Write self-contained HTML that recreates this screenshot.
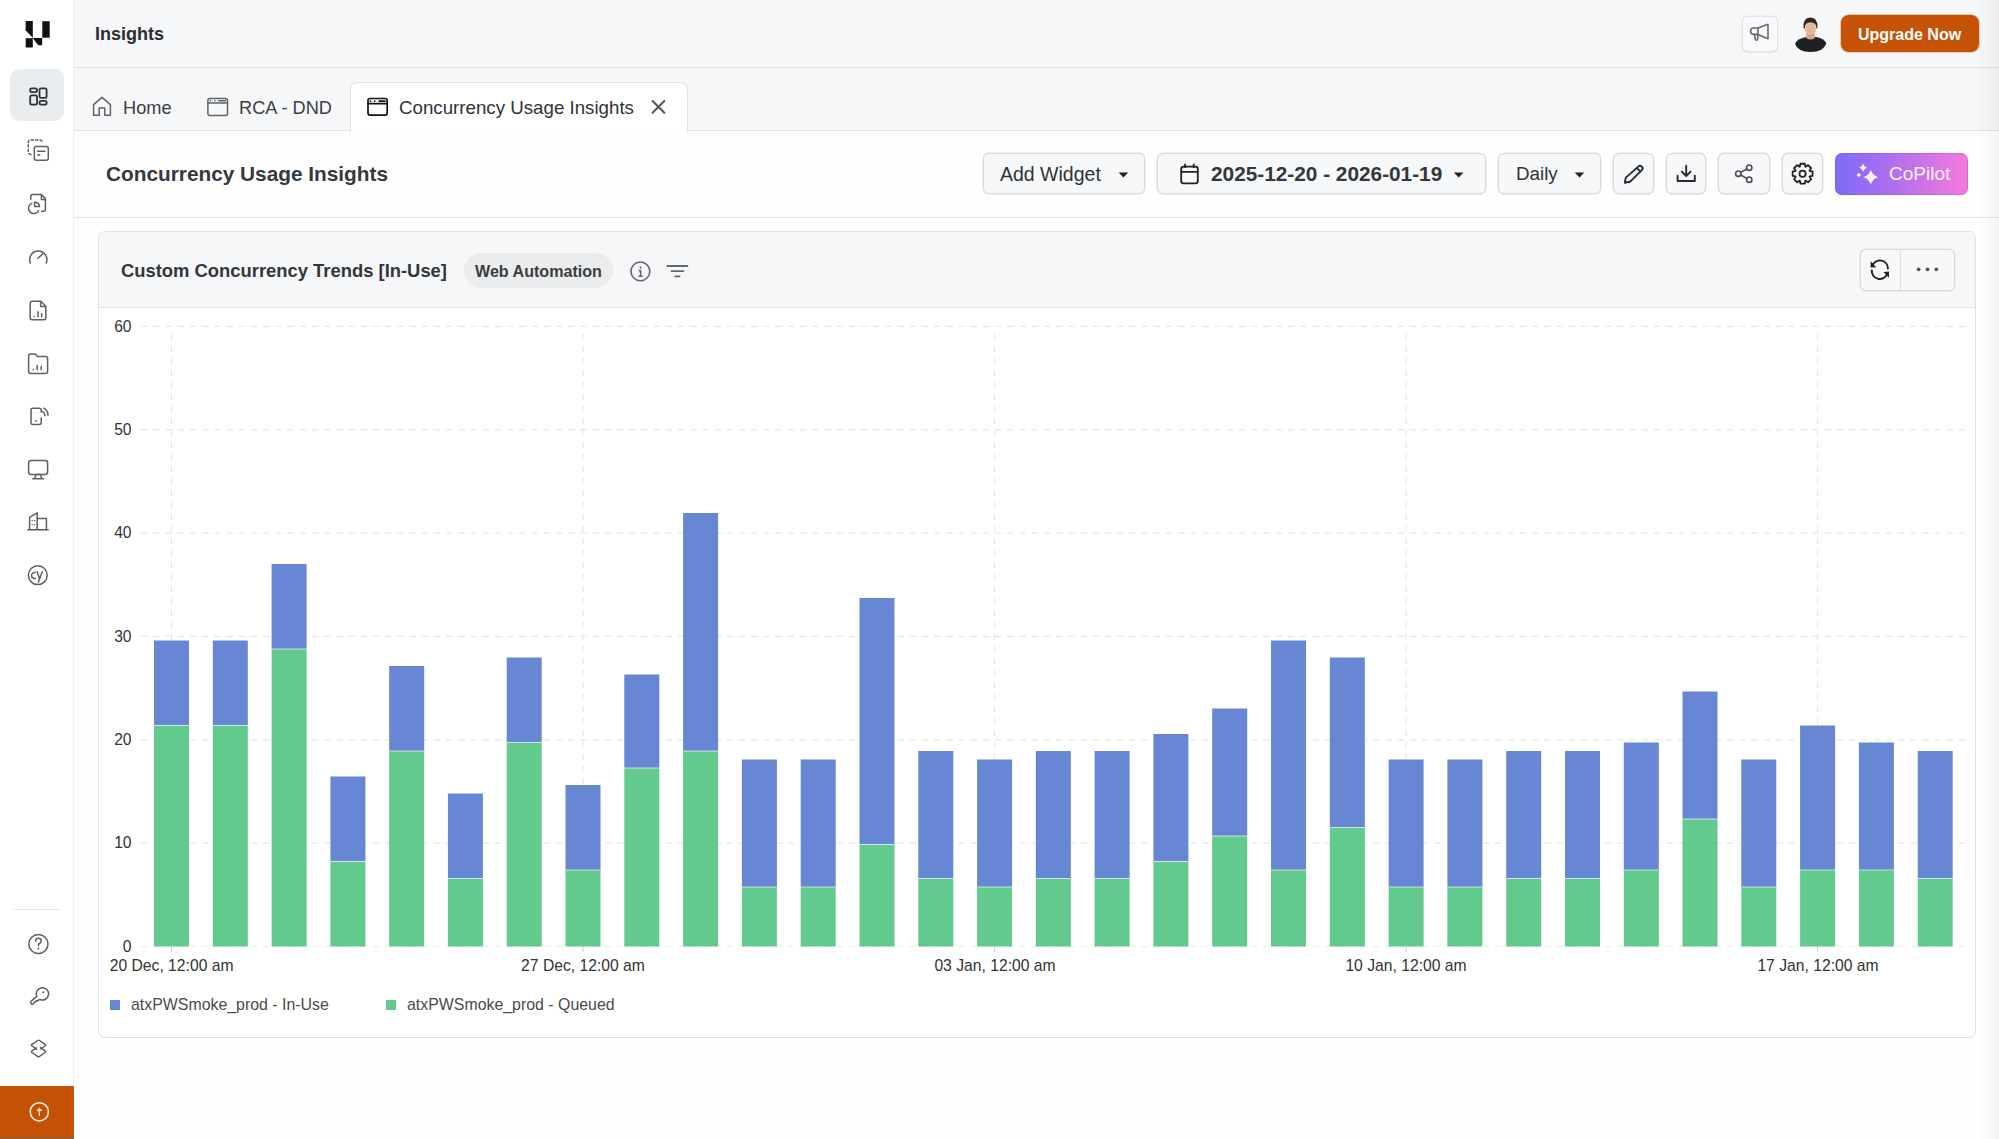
<!DOCTYPE html><html><head><meta charset="utf-8"><style>
*{box-sizing:border-box;margin:0;padding:0}
html,body{width:1999px;height:1139px;overflow:hidden}
body{position:relative;background:#fefefe;font-family:"Liberation Sans",sans-serif;color:#2d3135}
.abs{position:absolute}
.t{position:absolute;white-space:nowrap;line-height:1}
svg{position:absolute;overflow:visible}
.btn{position:absolute;background:#f7f8f9;border:1px solid #d8dadd;border-radius:6px;box-shadow:0 0 0 0.6px #e6e7e9,0 1px 1px rgba(0,0,0,0.05)}
</style></head><body><div class="abs" style="left:74px;top:0;width:1925px;height:68px;background:#f6f7f9;border-bottom:1px solid #dfe0e3;box-shadow:0 1px 0 #eceef0"></div><div class="abs" style="left:74px;top:68px;width:1925px;height:63px;background:#f6f7f9;border-bottom:1px solid #dfe2e5"></div><div class="abs" style="left:74px;top:131px;width:1925px;height:87px;background:#fefefe;border-bottom:1px solid #e2e4e7"></div><div class="t" style="left:95px;top:25px;font-size:18px;font-weight:bold;color:#2a2e33">Insights</div><div class="btn" style="left:1741.5px;top:15.7px;width:36px;height:36px;background:#f8f9fa;border-color:#e3e5e8"></div><svg style="left:1790px;top:12px" width="42" height="44" viewBox="1790 12 42 44">
<path d="M1795 43.8 Q1797.2 38.6 1805.6 37.2 L1815.6 37 Q1824.2 38.2 1826.3 43.2 Q1823.6 52 1810.6 52 Q1797.6 52 1795 43.8Z" fill="#1e2022"/>
<path d="M1806.4 34 H1814.8 V38.2 Q1810.6 40.6 1806.4 38.2Z" fill="#d6a488"/>
<ellipse cx="1810.5" cy="29.2" rx="5.3" ry="8.4" fill="#e4b896"/>
<path d="M1806.6 33.4 Q1810.5 36.4 1814.4 33.4 Q1813.8 36.8 1810.5 37.4 Q1807.2 36.8 1806.6 33.4Z" fill="#d99d8a"/>
<path d="M1803.6 28.4 Q1802.6 17.6 1810.4 17.6 Q1818.2 17.6 1817.4 28.4 L1816.4 28.6 Q1816.4 22.2 1810.4 22.2 Q1804.8 22.2 1804.8 28.6Z" fill="#33241e"/>
</svg><div class="abs" style="left:1841px;top:15px;width:138px;height:37px;background:#c65207;border-radius:8px;box-shadow:0 0 0 1px #f4c6a5"></div><div class="t" style="left:1858px;top:26.8px;font-size:16px;font-weight:bold;color:#fff">Upgrade Now</div><div class="abs" style="left:350px;top:82px;width:338px;height:50px;background:#fff;border:1px solid #e0e2e5;border-bottom:none;border-radius:7px 7px 0 0"></div><div class="t" style="left:123px;top:98.6px;font-size:18.2px;color:#3b4045">Home</div><div class="t" style="left:239px;top:98.6px;font-size:18.2px;color:#3b4045">RCA - DND</div><div class="t" style="left:399px;top:98.6px;font-size:18.72px;color:#2f3337">Concurrency Usage Insights</div><div class="t" style="left:106px;top:164px;font-size:20.8px;font-weight:bold;color:#35393d">Concurrency Usage Insights</div><div class="btn" style="left:983px;top:153px;width:162px;height:41px"></div><div class="t" style="left:1000px;top:165px;font-size:19.5px;color:#2f3337">Add Widget</div><div class="btn" style="left:1157px;top:153px;width:329px;height:41px"></div><div class="t" style="left:1211px;top:163.6px;font-size:20.8px;font-weight:bold;color:#33373b">2025-12-20 - 2026-01-19</div><div class="btn" style="left:1498px;top:153px;width:103px;height:41px"></div><div class="t" style="left:1516px;top:165px;font-size:18.8px;color:#2f3337">Daily</div><div class="btn" style="left:1613px;top:153px;width:41px;height:41px"></div><div class="btn" style="left:1666px;top:153px;width:40px;height:41px"></div><div class="btn" style="left:1718px;top:153px;width:52px;height:41px"></div><div class="btn" style="left:1782px;top:153px;width:41px;height:41px"></div><div class="abs" style="left:1835px;top:153px;width:133px;height:41.5px;border-radius:7px;background:linear-gradient(90deg,#7d6cf6 0%,#b06fee 45%,#f67bdb 100%);box-shadow:inset 0 0 0 1px rgba(90,50,170,0.18)"></div><div class="t" style="left:1889px;top:164.4px;font-size:19px;color:#fff2fc">CoPilot</div><div class="abs" style="left:98px;top:231px;width:1878px;height:807px;background:#fff;border:1px solid #e0e1e3;border-radius:7px;overflow:hidden"><div class="abs" style="left:0;top:0;width:1876px;height:76px;background:#f6f7f9;border-bottom:1px solid #e3e5e8"></div></div><div class="t" style="left:121px;top:262px;font-size:18.4px;font-weight:bold;color:#32363a">Custom Concurrency Trends [In-Use]</div><div class="abs" style="left:464px;top:253px;width:149px;height:35px;border-radius:18px;background:#ebeced"></div><div class="t" style="left:475px;top:263px;font-size:16.1px;font-weight:bold;color:#3a3d41">Web Automation</div><div class="btn" style="left:1860px;top:249px;width:95px;height:42px;background:#f7f8f9"></div><div class="abs" style="left:1900px;top:250px;width:1px;height:40px;background:#dcdfe3"></div><svg style="left:0;top:0" width="1999" height="1139" viewBox="0 0 1999 1139"><line x1="141" y1="326.4" x2="1966" y2="326.4" stroke="#e2e2e2" stroke-width="1" stroke-dasharray="6.5,5.7"/><line x1="141" y1="429.8" x2="1966" y2="429.8" stroke="#e2e2e2" stroke-width="1" stroke-dasharray="6.5,5.7"/><line x1="141" y1="533.1" x2="1966" y2="533.1" stroke="#e2e2e2" stroke-width="1" stroke-dasharray="6.5,5.7"/><line x1="141" y1="636.4" x2="1966" y2="636.4" stroke="#e2e2e2" stroke-width="1" stroke-dasharray="6.5,5.7"/><line x1="141" y1="739.8" x2="1966" y2="739.8" stroke="#e2e2e2" stroke-width="1" stroke-dasharray="6.5,5.7"/><line x1="141" y1="843.1" x2="1966" y2="843.1" stroke="#e2e2e2" stroke-width="1" stroke-dasharray="6.5,5.7"/><line x1="141" y1="946.5" x2="1966" y2="946.5" stroke="#ececec" stroke-width="1" stroke-dasharray="6.5,5.7"/><line x1="171.5" y1="334.0" x2="171.5" y2="946.5" stroke="#e4e4e4" stroke-width="1" stroke-dasharray="6,6"/><line x1="171.5" y1="946.5" x2="171.5" y2="952.2" stroke="#cfcfcf" stroke-width="1"/><line x1="583.0" y1="334.0" x2="583.0" y2="946.5" stroke="#e4e4e4" stroke-width="1" stroke-dasharray="6,6"/><line x1="583.0" y1="946.5" x2="583.0" y2="952.2" stroke="#cfcfcf" stroke-width="1"/><line x1="994.6" y1="334.0" x2="994.6" y2="946.5" stroke="#e4e4e4" stroke-width="1" stroke-dasharray="6,6"/><line x1="994.6" y1="946.5" x2="994.6" y2="952.2" stroke="#cfcfcf" stroke-width="1"/><line x1="1406.1" y1="334.0" x2="1406.1" y2="946.5" stroke="#e4e4e4" stroke-width="1" stroke-dasharray="6,6"/><line x1="1406.1" y1="946.5" x2="1406.1" y2="952.2" stroke="#cfcfcf" stroke-width="1"/><line x1="1817.6" y1="334.0" x2="1817.6" y2="946.5" stroke="#e4e4e4" stroke-width="1" stroke-dasharray="6,6"/><line x1="1817.6" y1="946.5" x2="1817.6" y2="952.2" stroke="#cfcfcf" stroke-width="1"/><rect x="154.0" y="640.5" width="35.0" height="85.0" fill="#6787d5"/><rect x="154.0" y="725.5" width="35.0" height="221.0" fill="#62ca8c"/><line x1="154.0" y1="725.5" x2="189.0" y2="725.5" stroke="#dff0ee" stroke-width="0.8"/><rect x="212.8" y="640.5" width="35.0" height="85.0" fill="#6787d5"/><rect x="212.8" y="725.5" width="35.0" height="221.0" fill="#62ca8c"/><line x1="212.8" y1="725.5" x2="247.8" y2="725.5" stroke="#dff0ee" stroke-width="0.8"/><rect x="271.6" y="564.0" width="35.0" height="85.0" fill="#6787d5"/><rect x="271.6" y="649.0" width="35.0" height="297.5" fill="#62ca8c"/><line x1="271.6" y1="649.0" x2="306.6" y2="649.0" stroke="#dff0ee" stroke-width="0.8"/><rect x="330.4" y="776.5" width="35.0" height="85.0" fill="#6787d5"/><rect x="330.4" y="861.5" width="35.0" height="85.0" fill="#62ca8c"/><line x1="330.4" y1="861.5" x2="365.4" y2="861.5" stroke="#dff0ee" stroke-width="0.8"/><rect x="389.2" y="666.0" width="35.0" height="85.0" fill="#6787d5"/><rect x="389.2" y="751.0" width="35.0" height="195.5" fill="#62ca8c"/><line x1="389.2" y1="751.0" x2="424.2" y2="751.0" stroke="#dff0ee" stroke-width="0.8"/><rect x="447.9" y="793.5" width="35.0" height="85.0" fill="#6787d5"/><rect x="447.9" y="878.5" width="35.0" height="68.0" fill="#62ca8c"/><line x1="447.9" y1="878.5" x2="482.9" y2="878.5" stroke="#dff0ee" stroke-width="0.8"/><rect x="506.7" y="657.5" width="35.0" height="85.0" fill="#6787d5"/><rect x="506.7" y="742.5" width="35.0" height="204.0" fill="#62ca8c"/><line x1="506.7" y1="742.5" x2="541.7" y2="742.5" stroke="#dff0ee" stroke-width="0.8"/><rect x="565.5" y="785.0" width="35.0" height="85.0" fill="#6787d5"/><rect x="565.5" y="870.0" width="35.0" height="76.5" fill="#62ca8c"/><line x1="565.5" y1="870.0" x2="600.5" y2="870.0" stroke="#dff0ee" stroke-width="0.8"/><rect x="624.3" y="674.5" width="35.0" height="93.5" fill="#6787d5"/><rect x="624.3" y="768.0" width="35.0" height="178.5" fill="#62ca8c"/><line x1="624.3" y1="768.0" x2="659.3" y2="768.0" stroke="#dff0ee" stroke-width="0.8"/><rect x="683.1" y="513.0" width="35.0" height="238.0" fill="#6787d5"/><rect x="683.1" y="751.0" width="35.0" height="195.5" fill="#62ca8c"/><line x1="683.1" y1="751.0" x2="718.1" y2="751.0" stroke="#dff0ee" stroke-width="0.8"/><rect x="741.9" y="759.5" width="35.0" height="127.5" fill="#6787d5"/><rect x="741.9" y="887.0" width="35.0" height="59.5" fill="#62ca8c"/><line x1="741.9" y1="887.0" x2="776.9" y2="887.0" stroke="#dff0ee" stroke-width="0.8"/><rect x="800.7" y="759.5" width="35.0" height="127.5" fill="#6787d5"/><rect x="800.7" y="887.0" width="35.0" height="59.5" fill="#62ca8c"/><line x1="800.7" y1="887.0" x2="835.7" y2="887.0" stroke="#dff0ee" stroke-width="0.8"/><rect x="859.5" y="598.0" width="35.0" height="246.5" fill="#6787d5"/><rect x="859.5" y="844.5" width="35.0" height="102.0" fill="#62ca8c"/><line x1="859.5" y1="844.5" x2="894.5" y2="844.5" stroke="#dff0ee" stroke-width="0.8"/><rect x="918.3" y="751.0" width="35.0" height="127.5" fill="#6787d5"/><rect x="918.3" y="878.5" width="35.0" height="68.0" fill="#62ca8c"/><line x1="918.3" y1="878.5" x2="953.3" y2="878.5" stroke="#dff0ee" stroke-width="0.8"/><rect x="977.1" y="759.5" width="35.0" height="127.5" fill="#6787d5"/><rect x="977.1" y="887.0" width="35.0" height="59.5" fill="#62ca8c"/><line x1="977.1" y1="887.0" x2="1012.1" y2="887.0" stroke="#dff0ee" stroke-width="0.8"/><rect x="1035.8" y="751.0" width="35.0" height="127.5" fill="#6787d5"/><rect x="1035.8" y="878.5" width="35.0" height="68.0" fill="#62ca8c"/><line x1="1035.8" y1="878.5" x2="1070.8" y2="878.5" stroke="#dff0ee" stroke-width="0.8"/><rect x="1094.6" y="751.0" width="35.0" height="127.5" fill="#6787d5"/><rect x="1094.6" y="878.5" width="35.0" height="68.0" fill="#62ca8c"/><line x1="1094.6" y1="878.5" x2="1129.6" y2="878.5" stroke="#dff0ee" stroke-width="0.8"/><rect x="1153.4" y="734.0" width="35.0" height="127.5" fill="#6787d5"/><rect x="1153.4" y="861.5" width="35.0" height="85.0" fill="#62ca8c"/><line x1="1153.4" y1="861.5" x2="1188.4" y2="861.5" stroke="#dff0ee" stroke-width="0.8"/><rect x="1212.2" y="708.5" width="35.0" height="127.5" fill="#6787d5"/><rect x="1212.2" y="836.0" width="35.0" height="110.5" fill="#62ca8c"/><line x1="1212.2" y1="836.0" x2="1247.2" y2="836.0" stroke="#dff0ee" stroke-width="0.8"/><rect x="1271.0" y="640.5" width="35.0" height="229.5" fill="#6787d5"/><rect x="1271.0" y="870.0" width="35.0" height="76.5" fill="#62ca8c"/><line x1="1271.0" y1="870.0" x2="1306.0" y2="870.0" stroke="#dff0ee" stroke-width="0.8"/><rect x="1329.8" y="657.5" width="35.0" height="170.0" fill="#6787d5"/><rect x="1329.8" y="827.5" width="35.0" height="119.0" fill="#62ca8c"/><line x1="1329.8" y1="827.5" x2="1364.8" y2="827.5" stroke="#dff0ee" stroke-width="0.8"/><rect x="1388.6" y="759.5" width="35.0" height="127.5" fill="#6787d5"/><rect x="1388.6" y="887.0" width="35.0" height="59.5" fill="#62ca8c"/><line x1="1388.6" y1="887.0" x2="1423.6" y2="887.0" stroke="#dff0ee" stroke-width="0.8"/><rect x="1447.4" y="759.5" width="35.0" height="127.5" fill="#6787d5"/><rect x="1447.4" y="887.0" width="35.0" height="59.5" fill="#62ca8c"/><line x1="1447.4" y1="887.0" x2="1482.4" y2="887.0" stroke="#dff0ee" stroke-width="0.8"/><rect x="1506.2" y="751.0" width="35.0" height="127.5" fill="#6787d5"/><rect x="1506.2" y="878.5" width="35.0" height="68.0" fill="#62ca8c"/><line x1="1506.2" y1="878.5" x2="1541.2" y2="878.5" stroke="#dff0ee" stroke-width="0.8"/><rect x="1565.0" y="751.0" width="35.0" height="127.5" fill="#6787d5"/><rect x="1565.0" y="878.5" width="35.0" height="68.0" fill="#62ca8c"/><line x1="1565.0" y1="878.5" x2="1600.0" y2="878.5" stroke="#dff0ee" stroke-width="0.8"/><rect x="1623.8" y="742.5" width="35.0" height="127.5" fill="#6787d5"/><rect x="1623.8" y="870.0" width="35.0" height="76.5" fill="#62ca8c"/><line x1="1623.8" y1="870.0" x2="1658.8" y2="870.0" stroke="#dff0ee" stroke-width="0.8"/><rect x="1682.5" y="691.5" width="35.0" height="127.5" fill="#6787d5"/><rect x="1682.5" y="819.0" width="35.0" height="127.5" fill="#62ca8c"/><line x1="1682.5" y1="819.0" x2="1717.5" y2="819.0" stroke="#dff0ee" stroke-width="0.8"/><rect x="1741.3" y="759.5" width="35.0" height="127.5" fill="#6787d5"/><rect x="1741.3" y="887.0" width="35.0" height="59.5" fill="#62ca8c"/><line x1="1741.3" y1="887.0" x2="1776.3" y2="887.0" stroke="#dff0ee" stroke-width="0.8"/><rect x="1800.1" y="725.5" width="35.0" height="144.5" fill="#6787d5"/><rect x="1800.1" y="870.0" width="35.0" height="76.5" fill="#62ca8c"/><line x1="1800.1" y1="870.0" x2="1835.1" y2="870.0" stroke="#dff0ee" stroke-width="0.8"/><rect x="1858.9" y="742.5" width="35.0" height="127.5" fill="#6787d5"/><rect x="1858.9" y="870.0" width="35.0" height="76.5" fill="#62ca8c"/><line x1="1858.9" y1="870.0" x2="1893.9" y2="870.0" stroke="#dff0ee" stroke-width="0.8"/><rect x="1917.7" y="751.0" width="35.0" height="127.5" fill="#6787d5"/><rect x="1917.7" y="878.5" width="35.0" height="68.0" fill="#62ca8c"/><line x1="1917.7" y1="878.5" x2="1952.7" y2="878.5" stroke="#dff0ee" stroke-width="0.8"/></svg><div class="t" style="right:1867.5px;top:318.7px;font-size:15.6px;color:#333">60</div><div class="t" style="right:1867.5px;top:422.1px;font-size:15.6px;color:#333">50</div><div class="t" style="right:1867.5px;top:525.4px;font-size:15.6px;color:#333">40</div><div class="t" style="right:1867.5px;top:628.7px;font-size:15.6px;color:#333">30</div><div class="t" style="right:1867.5px;top:732.1px;font-size:15.6px;color:#333">20</div><div class="t" style="right:1867.5px;top:835.4px;font-size:15.6px;color:#333">10</div><div class="t" style="right:1867.5px;top:938.8px;font-size:15.6px;color:#333">0</div><div class="t" style="left:109.6px;top:957.5px;width:124px;text-align:center;font-size:15.7px;color:#333">20 Dec, 12:00 am</div><div class="t" style="left:521.0px;top:957.5px;width:124px;text-align:center;font-size:15.7px;color:#333">27 Dec, 12:00 am</div><div class="t" style="left:933.0px;top:957.5px;width:124px;text-align:center;font-size:15.7px;color:#333">03 Jan, 12:00 am</div><div class="t" style="left:1344.0px;top:957.5px;width:124px;text-align:center;font-size:15.7px;color:#333">10 Jan, 12:00 am</div><div class="t" style="left:1756.0px;top:957.5px;width:124px;text-align:center;font-size:15.7px;color:#333">17 Jan, 12:00 am</div><div class="abs" style="left:110px;top:1000px;width:10px;height:10px;background:#6787d5"></div><div class="t" style="left:131px;top:997px;font-size:15.9px;color:#4a4a4a">atxPWSmoke_prod - In-Use</div><div class="abs" style="left:386px;top:1000px;width:10px;height:10px;background:#62ca8c"></div><div class="t" style="left:407px;top:997px;font-size:15.9px;color:#4a4a4a">atxPWSmoke_prod - Queued</div><div class="abs" style="left:1979px;top:0;width:20px;height:1139px;background:linear-gradient(90deg,rgba(0,0,0,0.005),rgba(0,0,0,0.04))"></div><div class="abs" style="left:0;top:0;width:74px;height:1139px;background:#fff;border-right:1px solid #f0f1f3"></div><div class="abs" style="left:10px;top:69px;width:54px;height:52px;border-radius:9px;background:#eaedf0"></div><div class="abs" style="left:14px;top:909px;width:46px;height:1px;background:#e6e8eb"></div><div class="abs" style="left:0;top:1085.5px;width:74px;height:53.5px;background:#c35207;border-bottom:1px solid #84604f"></div><svg style="left:20px;top:15px" width="36" height="38" viewBox="20 15 36 38"><path fill="#111" d="M25.7 21 H32.8 V37.7 L25.6 30.3Z"/><path fill="#111" d="M25.7 38.2 H32.8 V47.5 H25.7Z"/><path fill="#111" d="M32.8 38 H42.2 V45.3 H38.9 Q38.2 45.3 37.6 44.6Z"/><path fill="#111" d="M42.3 21.2 H49.7 V37.7 H42.3Z"/></svg><svg style="left:24px;top:82px" width="30" height="30" viewBox="24 82 30 30"><g fill="none" stroke="#2f3338" stroke-width="1.8"><rect x="30.2" y="88.3" width="6.8" height="3.9" rx="1.6"/><rect x="30.2" y="95.4" width="6.8" height="9.3" rx="1.6"/><rect x="39.5" y="88.3" width="7.1" height="9.5" rx="1.6"/><rect x="39.5" y="100.9" width="7.1" height="3.8" rx="1.6"/></g></svg><svg style="left:24px;top:136px" width="30" height="30" viewBox="24 136 30 30"><path fill="none" stroke="#5b6066" stroke-width="1.5" stroke-linecap="round" stroke-linejoin="round" stroke-dasharray="2.2,2.2" d="M31 154.5 Q28.2 154 28.2 151 V143 Q28.2 140 31 140 H39.5 Q42.3 140 42.4 142.5"/><rect fill="none" stroke="#5b6066" stroke-width="1.5" stroke-linecap="round" stroke-linejoin="round" x="34.3" y="146.4" width="14" height="13.8" rx="2"/><path fill="none" stroke="#5b6066" stroke-width="1.5" stroke-linecap="round" stroke-linejoin="round" d="M37.7 151.3 H45 M37.7 155.1 H39.8"/></svg><svg style="left:24px;top:188px" width="30" height="30" viewBox="24 188 30 30"><path fill="none" stroke="#5b6066" stroke-width="1.5" stroke-linecap="round" stroke-linejoin="round" d="M30.8 199.2 V196.6 Q30.8 194.6 32.8 194.6 H41.4 L45.4 198.6 V209.2 Q45.4 211.2 43.4 211.2 H41.6"/><path fill="none" stroke="#5b6066" stroke-width="1.5" stroke-linecap="round" stroke-linejoin="round" d="M41.4 194.6 V199.6 H45.4"/><path fill="none" stroke="#5b6066" stroke-width="1.5" stroke-linecap="round" stroke-linejoin="round" d="M31.8 203.4 A5.3 5.3 0 1 0 38.6 210.6"/><path fill="none" stroke="#5b6066" stroke-width="1.5" stroke-linecap="round" stroke-linejoin="round" d="M34.6 202.2 V206.5 H39.6 A5 5 0 0 0 34.6 202.2Z"/></svg><svg style="left:24px;top:242px" width="30" height="30" viewBox="24 242 30 30"><path fill="none" stroke="#5b6066" stroke-width="1.5" stroke-linecap="round" stroke-linejoin="round" d="M30.4 263 A8.6 8.6 0 1 1 46.2 263"/><path fill="none" stroke="#5b6066" stroke-width="1.5" stroke-linecap="round" stroke-linejoin="round" d="M37.9 258.3 L42.6 254.1"/></svg><svg style="left:24px;top:296px" width="30" height="30" viewBox="24 296 30 30"><path fill="none" stroke="#5b6066" stroke-width="1.5" stroke-linecap="round" stroke-linejoin="round" d="M32.2 301.2 H40.8 L45.8 306.2 V317.8 Q45.8 319.8 43.8 319.8 H32.2 Q30.2 319.8 30.2 317.8 V303.2 Q30.2 301.2 32.2 301.2Z"/><path fill="none" stroke="#5b6066" stroke-width="1.5" stroke-linecap="round" stroke-linejoin="round" d="M40.6 301.4 V306.4 H45.6"/><path fill="none" stroke="#5b6066" stroke-width="1.5" stroke-linecap="round" stroke-linejoin="round" stroke-width="1.7" d="M34.3 316.6 V316.8 M38 311.8 V316.8 M41.7 313.8 V316.8"/></svg><svg style="left:24px;top:348px" width="30" height="30" viewBox="24 348 30 30"><path fill="none" stroke="#5b6066" stroke-width="1.5" stroke-linecap="round" stroke-linejoin="round" d="M28.6 356 Q28.6 354 30.6 354 H35.2 L37.6 356.6 H45.6 Q47.6 356.6 47.6 358.6 V371.4 Q47.6 373.4 45.6 373.4 H30.6 Q28.6 373.4 28.6 371.4Z"/><path fill="none" stroke="#5b6066" stroke-width="1.5" stroke-linecap="round" stroke-linejoin="round" stroke-width="1.7" d="M33.2 369.6 V369.8 M37.2 365.6 V369.8 M41.2 366.6 V369.8"/></svg><svg style="left:24px;top:402px" width="30" height="30" viewBox="24 402 30 30"><path fill="none" stroke="#5b6066" stroke-width="1.5" stroke-linecap="round" stroke-linejoin="round" d="M41.2 412 V410.2 Q41.2 408.2 39.2 408.2 H33 Q31 408.2 31 410.2 V422.6 Q31 424.6 33 424.6 H39.2 Q41.2 424.6 41.2 422.6 V418"/><path fill="none" stroke="#5b6066" stroke-width="1.5" stroke-linecap="round" stroke-linejoin="round" d="M35.6 421 H36.4"/><path fill="none" stroke="#5b6066" stroke-width="1.5" stroke-linecap="round" stroke-linejoin="round" d="M42.6 411.6 A4.8 4.8 0 0 1 45 415.8 M43.8 408.2 A8 8 0 0 1 48 415.2"/></svg><svg style="left:24px;top:455px" width="30" height="30" viewBox="24 455 30 30"><rect fill="none" stroke="#5b6066" stroke-width="1.5" stroke-linecap="round" stroke-linejoin="round" x="28.6" y="460.4" width="19" height="14" rx="2.4"/><path fill="none" stroke="#5b6066" stroke-width="1.5" stroke-linecap="round" stroke-linejoin="round" d="M34.5 478.8 L36 474.6 H40.4 L41.8 478.8 M32.8 478.8 H43.4"/></svg><svg style="left:24px;top:508px" width="30" height="30" viewBox="24 508 30 30"><path fill="none" stroke="#5b6066" stroke-width="1.5" stroke-linecap="round" stroke-linejoin="round" d="M27.8 529.8 H48.2"/><path fill="none" stroke="#5b6066" stroke-width="1.5" stroke-linecap="round" stroke-linejoin="round" d="M29.6 529.6 V517.4 L37.2 512.8 V529.6"/><path fill="none" stroke="#5b6066" stroke-width="1.5" stroke-linecap="round" stroke-linejoin="round" d="M37.2 518.4 H46.4 V529.6"/><path fill="none" stroke="#5b6066" stroke-width="1.5" stroke-linecap="round" stroke-linejoin="round" stroke-width="1.6" d="M32.2 520.4 V520.6 M34.8 520.4 V520.6 M32.2 524.4 V524.6 M34.8 524.4 V524.6"/></svg><svg style="left:24px;top:560px" width="30" height="30" viewBox="24 560 30 30"><circle fill="none" stroke="#5b6066" stroke-width="1.5" stroke-linecap="round" stroke-linejoin="round" cx="37.8" cy="575.2" r="9.4"/><path fill="none" stroke="#5b6066" stroke-width="1.5" stroke-linecap="round" stroke-linejoin="round" d="M35.2 572.6 A3 3 0 1 0 35.4 578.4"/><path fill="none" stroke="#5b6066" stroke-width="1.5" stroke-linecap="round" stroke-linejoin="round" d="M37.2 571.8 L39.4 578.4 M42.2 571.8 L38.4 582"/></svg><svg style="left:24px;top:930px" width="30" height="30" viewBox="24 930 30 30"><circle fill="none" stroke="#5b6066" stroke-width="1.5" stroke-linecap="round" stroke-linejoin="round" cx="38.4" cy="944" r="9.6"/><path fill="none" stroke="#5b6066" stroke-width="1.5" stroke-linecap="round" stroke-linejoin="round" d="M35.6 941.2 Q35.6 938.2 38.4 938.2 Q41.2 938.2 41.2 940.9 Q41.2 942.6 39.4 943.5 Q38.4 944.1 38.4 945.6"/><circle cx="38.4" cy="948.6" r="1" fill="#5b6066"/></svg><svg style="left:24px;top:984px" width="30" height="30" viewBox="24 984 30 30"><path fill="none" stroke="#5b6066" stroke-width="1.5" stroke-linecap="round" stroke-linejoin="round" d="M36.8 996.4 A6.2 6.2 0 1 1 39.9 999.5 L38.6 999.9 L37.6 1001 L36.6 1000.8 L35.8 1001.8 L34.9 1001.6 L33.6 1003.4 Q32.4 1004.8 31.2 1003.6 Q30 1002.4 31.2 1001.1 L36.8 996.4Z"/><circle cx="43.2" cy="992.2" r="1" fill="#5b6066"/></svg><svg style="left:24px;top:1036px" width="30" height="30" viewBox="24 1036 30 30"><path fill="none" stroke="#5b6066" stroke-width="1.5" stroke-linecap="round" stroke-linejoin="round" d="M36.4 1049.2 L32 1046 Q30.8 1045.2 32 1044.3 L37.5 1040.5 Q38.5 1039.8 39.5 1040.5 L45 1044.3 Q46.2 1045.2 45 1046 L40.6 1049"/><path fill="none" stroke="#5b6066" stroke-width="1.5" stroke-linecap="round" stroke-linejoin="round" d="M40.6 1047.6 L45 1050.8 Q46.2 1051.6 45 1052.5 L39.5 1056.3 Q38.5 1057 37.5 1056.3 L32 1052.5 Q30.8 1051.6 32 1050.8 L36.4 1047.8"/></svg><svg style="left:24px;top:1097px" width="30" height="30" viewBox="24 1097 30 30"><g fill="none" stroke="#ffeedd" stroke-width="1.5" stroke-linecap="round" stroke-linejoin="round"><circle cx="39.3" cy="1111.8" r="9.1"/><path stroke-width="1.3" d="M39.3 1115.6 V1109.6"/></g><path fill="#ffeedd" d="M39.3 1107.4 L42.3 1111 H36.3Z"/></svg><svg style="left:88px;top:92px" width="30" height="30" viewBox="88 92 30 30"><path fill="none" stroke="#5f6368" stroke-width="1.5" stroke-linecap="round" stroke-linejoin="round" d="M93.6 115.2 V104.6 L102 97.4 L110.4 104.6 V115.2 H104.8 V108 H99.2 V115.2Z"/></svg><svg style="left:200px;top:92px" width="34" height="30" viewBox="200 92 34 30"><rect fill="none" stroke="#5f6368" stroke-width="1.5" stroke-linecap="round" stroke-linejoin="round" x="207.9" y="98.4" width="19.6" height="17" rx="2"/><path fill="none" stroke="#5f6368" stroke-width="1.5" stroke-linecap="round" stroke-linejoin="round" d="M208 102.9 H227.4 M210.4 100.7 H210.6 M214.8 100.7 H215 M218.8 100.7 H225.6"/></svg><svg style="left:362px;top:92px" width="34" height="30" viewBox="362 92 34 30"><rect fill="none" stroke="#141414" stroke-width="1.7" stroke-linecap="round" stroke-linejoin="round" x="368" y="98.5" width="19.2" height="16.6" rx="2"/><path fill="none" stroke="#141414" stroke-width="1.7" stroke-linecap="round" stroke-linejoin="round" d="M368.2 103.6 H387 M370.4 101.1 H370.6 M374.6 101.1 H374.8 M379.2 101.1 H385"/></svg><svg style="left:646px;top:94px" width="26" height="26" viewBox="646 94 26 26"><path fill="none" stroke="#555" stroke-width="2" stroke-linecap="round" d="M652.6 101 L664.3 112.8 M664.3 101 L652.6 112.8"/></svg><svg style="left:1745px;top:18px" width="30" height="30" viewBox="1745 18 30 30"><path fill="none" stroke="#666a6e" stroke-width="1.6" stroke-linecap="round" stroke-linejoin="round" d="M1757.9 28 L1767.4 24.6 Q1768 24.4 1768 25 V38.2 Q1768 38.8 1767.4 38.6 L1757.9 34.4Z"/><path fill="none" stroke="#666a6e" stroke-width="1.6" stroke-linecap="round" stroke-linejoin="round" d="M1757.9 28 H1753.8 Q1750.6 28 1750.6 31.2 Q1750.6 34.4 1753.8 34.4 H1757.9"/><path fill="none" stroke="#666a6e" stroke-width="1.6" stroke-linecap="round" stroke-linejoin="round" d="M1754.6 34.6 L1755.4 39.6 Q1755.6 40.2 1756.4 40.2 Q1757.4 40.2 1757.6 39.6 L1757.9 34.6"/></svg><svg style="left:1115px;top:166px" width="16" height="16" viewBox="1115 166 16 16"><path fill="#222" d="M1118.6000000000001 172.6 H1128.2 L1123.4 177.6Z"/></svg><svg style="left:1450px;top:166px" width="16" height="16" viewBox="1450 166 16 16"><path fill="#222" d="M1453.9 172.6 H1463.5 L1458.7 177.6Z"/></svg><svg style="left:1571px;top:166px" width="16" height="16" viewBox="1571 166 16 16"><path fill="#222" d="M1574.7 172.6 H1584.3 L1579.5 177.6Z"/></svg><svg style="left:1176px;top:160px" width="26" height="28" viewBox="1176 160 26 28"><rect fill="none" stroke="#222" stroke-width="1.8" stroke-linecap="round" stroke-linejoin="round" x="1181.2" y="166.6" width="16.6" height="16.8" rx="2.4"/><path fill="none" stroke="#222" stroke-width="1.8" stroke-linecap="round" stroke-linejoin="round" d="M1181.4 171.9 H1197.6 M1185.1 164.4 V167.2 M1193.7 164.4 V167.2"/></svg><svg style="left:1620px;top:160px" width="30" height="30" viewBox="1620 160 30 30"><path fill="none" stroke="#262a2e" stroke-width="1.9" stroke-linecap="round" stroke-linejoin="round" d="M1638.6 166.4 Q1640 165 1641.4 166.4 L1642 167 Q1643.4 168.4 1642 169.8 L1630 181.8 L1624.8 182.8 L1625.8 177.6Z"/><path fill="none" stroke="#262a2e" stroke-width="1.9" stroke-linecap="round" stroke-linejoin="round" d="M1637 168.2 L1640.2 171.4"/></svg><svg style="left:1672px;top:160px" width="30" height="30" viewBox="1672 160 30 30"><path fill="none" stroke="#262a2e" stroke-width="1.9" stroke-linecap="round" stroke-linejoin="round" d="M1686.2 165.6 V176 M1681.8 171.6 L1686.2 176 L1690.6 171.6 M1677.6 175.6 V181 H1694.8 V175.6"/></svg><svg style="left:1730px;top:160px" width="30" height="30" viewBox="1730 160 30 30"><circle fill="none" stroke="#4a4e53" stroke-width="1.6" stroke-linecap="round" stroke-linejoin="round" cx="1749.2" cy="167.7" r="2.7"/><circle fill="none" stroke="#4a4e53" stroke-width="1.6" stroke-linecap="round" stroke-linejoin="round" cx="1738.3" cy="173.7" r="2.7"/><circle fill="none" stroke="#4a4e53" stroke-width="1.6" stroke-linecap="round" stroke-linejoin="round" cx="1749.2" cy="179.7" r="2.7"/><path fill="none" stroke="#4a4e53" stroke-width="1.6" stroke-linecap="round" stroke-linejoin="round" d="M1740.7 172.4 L1746.8 169 M1740.7 175 L1746.8 178.4"/></svg><svg style="left:1788px;top:159px" width="30" height="30" viewBox="1788 159 30 30"><path fill="none" stroke="#222" stroke-width="1.8" stroke-linejoin="round" d="M1812.55 171.47 L1812.55 175.93 L1809.71 176.38 L1809.52 176.84 L1811.21 179.16 L1808.06 182.31 L1805.74 180.62 L1805.28 180.81 L1804.83 183.65 L1800.37 183.65 L1799.92 180.81 L1799.46 180.62 L1797.14 182.31 L1793.99 179.16 L1795.68 176.84 L1795.49 176.38 L1792.65 175.93 L1792.65 171.47 L1795.49 171.02 L1795.68 170.56 L1793.99 168.24 L1797.14 165.09 L1799.46 166.78 L1799.92 166.59 L1800.37 163.75 L1804.83 163.75 L1805.28 166.59 L1805.74 166.78 L1808.06 165.09 L1811.21 168.24 L1809.52 170.56 L1809.71 171.02Z"/><circle fill="none" stroke="#222" stroke-width="1.8" cx="1802.6" cy="173.7" r="3.1"/></svg><svg style="left:1850px;top:158px" width="32" height="32" viewBox="1850 158 32 32"><path fill="#fff5fd" d="M1870.80 169.80 Q1872.43 175.57 1878.20 177.20 Q1872.43 178.83 1870.80 184.60 Q1869.17 178.83 1863.40 177.20 Q1869.17 175.57 1870.80 169.80Z"/><path fill="#fff5fd" d="M1863.20 163.80 Q1864.05 166.85 1867.10 167.70 Q1864.05 168.55 1863.20 171.60 Q1862.35 168.55 1859.30 167.70 Q1862.35 166.85 1863.20 163.80Z"/><path fill="#fff5fd" d="M1858.80 172.40 Q1859.37 174.33 1861.30 174.90 Q1859.37 175.47 1858.80 177.40 Q1858.23 175.47 1856.30 174.90 Q1858.23 174.33 1858.80 172.40Z"/></svg><svg style="left:626px;top:258px" width="30" height="30" viewBox="626 258 30 30"><circle fill="none" stroke="#63676c" stroke-width="1.6" stroke-linecap="round" stroke-linejoin="round" cx="640.4" cy="271.4" r="9.4"/><circle cx="640.6" cy="267.6" r="1.1" fill="#63676c"/><path fill="none" stroke="#63676c" stroke-width="1.6" stroke-linecap="round" stroke-linejoin="round" d="M639.2 270.6 H640.6 V276 M639 276.2 H642.2"/></svg><svg style="left:662px;top:258px" width="30" height="26" viewBox="662 258 30 26"><path fill="none" stroke="#63676c" stroke-width="1.8" stroke-linecap="round" d="M667.4 266 H687.4 M671.6 271.2 H683.4 M675.2 276.4 H679.6"/></svg><svg style="left:1864px;top:255px" width="34" height="30" viewBox="1864 255 34 30"><path fill="none" stroke="#222" stroke-width="2" stroke-linecap="round" stroke-linejoin="round" d="M1887.9 268.4 A8 8 0 0 0 1872.6 265.2"/><path fill="none" stroke="#222" stroke-width="2" stroke-linecap="round" stroke-linejoin="round" d="M1871.8 270.4 A8 8 0 0 0 1887.2 274"/><path fill="#222" d="M1870.6 261.2 L1876.2 267.2 L1870.6 267.6Z"/><path fill="#222" d="M1889 277.8 L1883.4 272 L1889 271.6Z"/></svg><svg style="left:1912px;top:264px" width="30" height="12" viewBox="1912 264 30 12"><g fill="#555"><circle cx="1918.6" cy="269.3" r="1.9"/><circle cx="1927.5" cy="269.3" r="1.9"/><circle cx="1936.3" cy="269.3" r="1.9"/></g></svg></body></html>
